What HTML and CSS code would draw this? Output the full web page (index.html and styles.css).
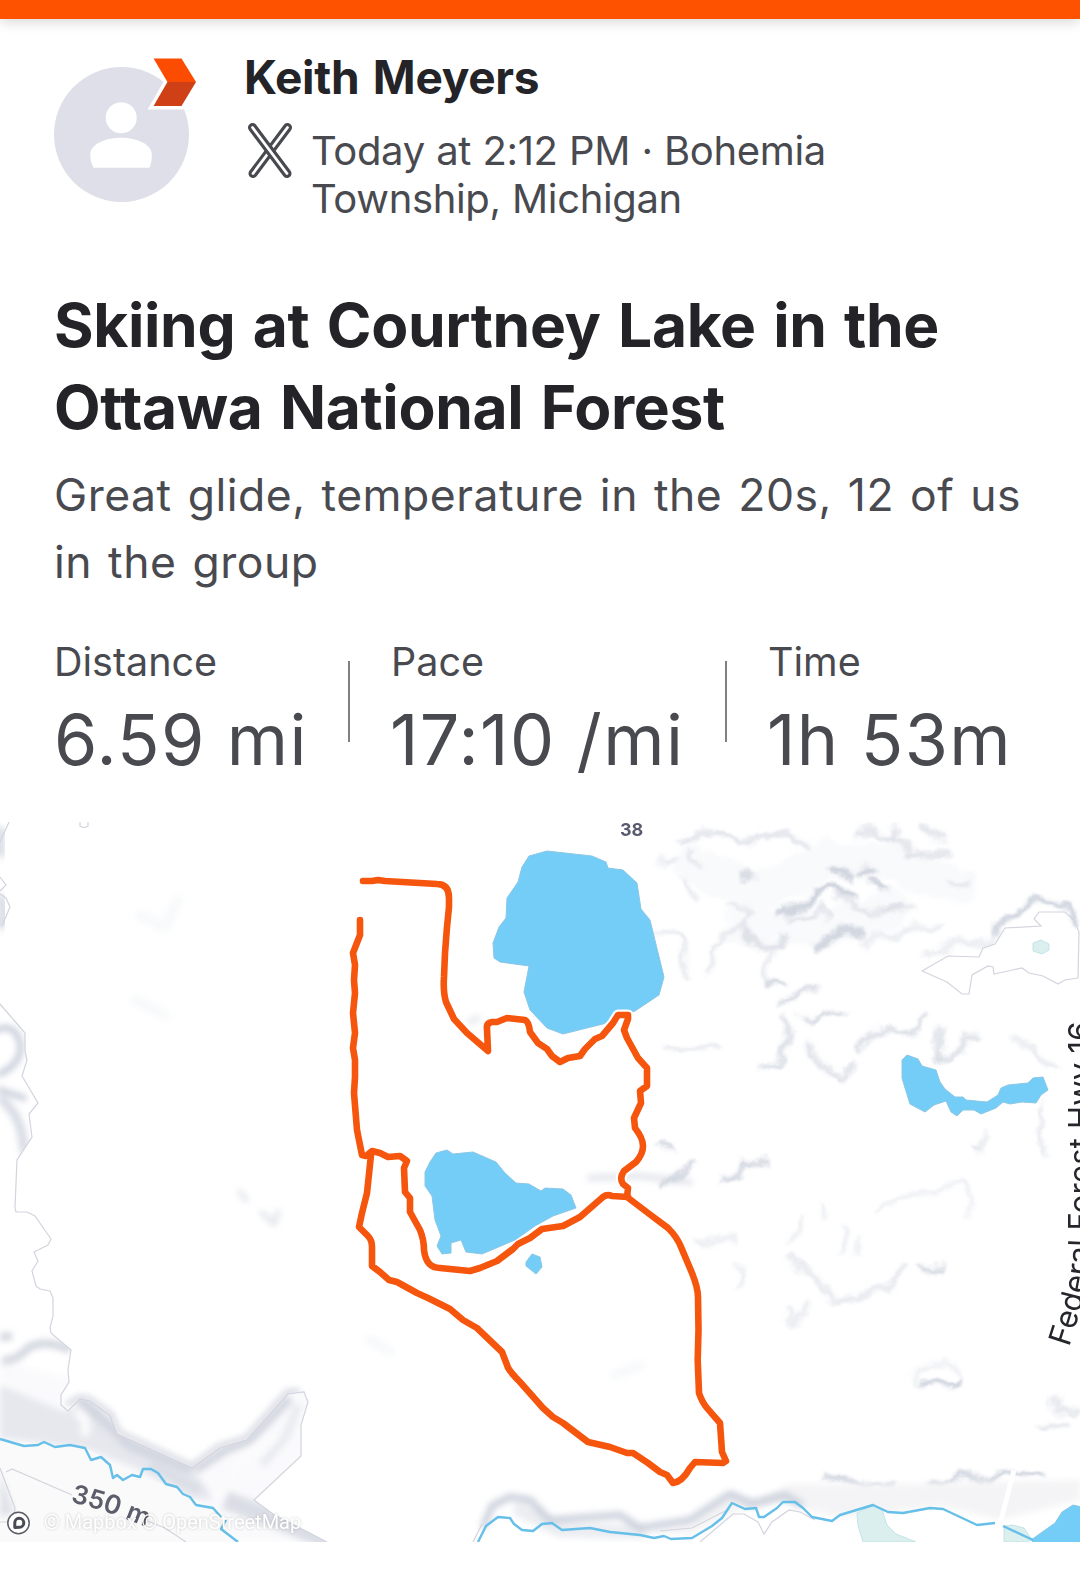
FILE: index.html
```html
<!DOCTYPE html>
<html lang="en">

<head>
    <meta charset="UTF-8">
    <meta name="viewport" content="width=device-width, initial-scale=1.0">
    <title>Activity</title>
    <link rel="stylesheet" href="styles.css">
</head>

<body>
    <div class="top-bar"></div>

    <header class="athlete">
        <svg class="avatar" viewBox="54 54 144 150">
            <circle cx="121.5" cy="134.5" r="67.5" fill="#dedfe8" />
            <circle cx="121.2" cy="117.7" r="15.5" fill="#fff" />
            <path d="M93.500 167.700C91 163 90 158 90.300 153C92 143 107 137.700 121 137.700S150 143 151.700 153C152 158 151.500 163 149.500 167.700Z" fill="#fff" />
            <path d="M153.600 58.500H181.500L196 82L181.500 106H153.600L167.400 82Z" fill="#fff" stroke="#fff" stroke-width="7" />
            <path d="M153.600 58.500H181.500L196 82H167.400Z" fill="#fc4c02" />
            <path d="M167.400 82H196L181.500 106H153.600Z" fill="#cf4016" />
        </svg>

        <div class="athlete-info">
            <div class="athlete-name">Keith Meyers</div>
            <div class="meta">
                <svg class="sport-icon" viewBox="0 0 44 55">
                    <path d="M39.500 4.500L5 50.500" class="ski" />
                    <path d="M39.500 4.500L5 50.500" class="ski-inner" />
                    <path d="M4.500 4.500L39 50.500" class="ski" />
                    <path d="M4.500 4.500L39 50.500" class="ski-inner" />
                </svg>
                <div class="meta-text">Today at 2:12 PM · Bohemia<br>Township, Michigan</div>
            </div>
        </div>
    </header>

    <h1 class="title">Skiing at Courtney Lake in the<br>Ottawa National Forest</h1>
    <p class="description">Great glide, temperature in the 20s, 12 of us<br>in the group</p>

    <div class="stats">
        <div class="stat">
            <div class="stat-label">Distance</div>
            <div class="stat-value">6.59 mi</div>
        </div>
        <div class="stat">
            <div class="stat-label">Pace</div>
            <div class="stat-value">17:10 /mi</div>
        </div>
        <div class="stat">
            <div class="stat-label">Time</div>
            <div class="stat-value">1h 53m</div>
        </div>
    </div>

    <svg class="map" viewBox="0 822 1080 720">
        <defs>
            <filter id="soft" x="-20%" y="-20%" width="140%" height="140%">
                <feGaussianBlur stdDeviation="3" />
            </filter>
            <!-- blurred strokes with a ragged edge -->
            <filter id="relief" x="-10%" y="-10%" width="120%" height="120%">
                <feTurbulence type="fractalNoise" baseFrequency="0.012" numOctaves="4" seed="4" result="noise" />
                <feGaussianBlur in="SourceGraphic" stdDeviation="6" />
                <feDisplacementMap in2="noise" scale="60" xChannelSelector="R" yChannelSelector="G" />
            </filter>
            <clipPath id="valley">
                <path d="M0 1300L51 1333L71 1350L68 1370L69 1382L61 1395L61 1405L68 1411L80 1399L90 1401L110 1416L117 1434L192 1468L220 1448L247 1440L288 1394L304 1392L308 1402L301 1425L301 1456L254 1500L273 1514L327 1542H0Z" />
            </clipPath>
            <clipPath id="west">
                <path d="M0 1004L25 1033L25 1050L27 1060L22 1076L38 1103L29 1114L32 1137L17 1160L15 1207H0Z" />
            </clipPath>
            <path id="highway" d="M1069 1347C1078 1318 1091 1284 1091 1230V1000" />
            <path id="contour" d="M70 1502Q112 1512 148 1528" />
        </defs>

        <!-- hillshade, upper right -->
        <g transform="translate(660 820) scale(0.3333)" class="shade" filter="url(#relief)">
            <path d="M100 130L300 220L500 120L700 130L900 200M250 320L500 330L700 260" opacity=".1" stroke-width="110" />
            <path d="M60 65L120 48L190 47L230 65L270 62L310 42L380 50L440 75" opacity=".7" />
            <path d="M85 90L90 120L120 130M70 180L80 215L110 225M0 120L25 140L45 120" opacity=".5" />
            <path d="M240 163L290 168" />
            <path d="M590 42L640 38L700 60L750 80M700 20L690 60M800 20L840 60M740 100L860 100" opacity=".55" stroke-width="18" />
            <path d="M520 140L575 175M630 185L670 215M600 160L640 150" stroke-width="17" />
            <path d="M370 270L420 262L470 215L510 203L570 225" stroke-width="18" />
            <path d="M400 290L450 290L480 250L500 300M530 230L640 280L720 250" opacity=".6" />
            <path d="M470 378L520 350L570 330L600 340" stroke-width="26" opacity=".8" />
            <path d="M600 375L640 350L760 325L850 320M680 260L760 265" stroke-width="16" opacity=".4" />
            <path d="M215 260L270 270L240 310L200 350L160 390L150 470" opacity=".5" />
            <path d="M250 320L275 365L310 388L350 385L380 340" opacity=".8" />
            <path d="M0 340L50 355L70 420L90 470M330 400L315 480L370 490" opacity=".5" />
            <path d="M310 490L380 490M360 550L390 550L430 515L475 498" opacity=".9" />
            <path d="M425 590L450 615L490 580L560 580" opacity=".9" />
            <path d="M580 690L640 635L700 630L750 640L775 600L800 570" opacity=".8" />
            <path d="M375 600L388 680L350 725L300 750" opacity=".8" />
            <path d="M450 670L490 740L540 780L580 740" opacity=".6" stroke-width="16" />
            <path d="M20 690L100 695L180 680" opacity=".5" />
            <path d="M830 720L880 710L910 660L970 645M830 640L845 720" opacity=".8" />
            <path d="M780 415L860 385L930 360L990 355" opacity=".5" />
            <path d="M1000 340L1030 300L1070 290L1110 255L1160 245L1220 260L1250 310" stroke-width="15" />
            <path d="M870 195L930 195M1060 650L1110 680L1190 740M1140 850L1135 950L1155 1000M975 930L955 990L940 970" opacity=".5" />
            <path d="M0 1100L50 1075L90 1035M190 1080L235 1075L250 1025L320 1020M0 970L40 990" />
            <path d="M640 1170L700 1140L840 1120L920 1080L930 1180" opacity=".35" />
            <path d="M480 1150L500 1200M430 1200L400 1260M550 1230V1300M600 1260L590 1300" opacity=".4" />
        </g>
        <g transform="translate(660 1180) scale(0.3333)" class="shade" filter="url(#relief)">
            <path d="M110 175L220 178M240 260L235 320M370 390L405 425L440 370" opacity=".45" />
            <path d="M390 230L440 265L470 310L550 370L690 310L730 250" opacity=".5" stroke-width="14" />
            <path d="M780 260L850 262" />
            <path d="M760 600L770 560L820 545L880 560L890 590" opacity=".35" />
            <path d="M780 605L830 615L880 632L895 610" stroke-width="15" />
            <path d="M1170 660L1200 695L1260 690M1140 740L1220 735" opacity=".6" />
            <path d="M490 890L570 905L700 918M810 915L900 890L990 905L1040 870L1150 880" stroke-width="14" />
        </g>
        <path d="M640 1532L690 1524L732 1494L760 1500L790 1484L900 1484L1080 1480V1500L1000 1520L940 1506L840 1518L780 1502L740 1510L690 1535Z" fill="#f4f4f6" filter="url(#soft)" />
        <g class="shade" filter="url(#soft)">
            <path d="M590 1178L640 1176L690 1182" stroke-width="6" opacity=".5" />
            <path d="M470 1022L478 1018M240 1192L246 1200M262 1213L274 1224L278 1212" stroke-width="5" opacity=".5" />
            <path d="M370 1340L390 1352M615 1375L640 1365M140 915L165 928L178 900M135 1000L165 1015" stroke-width="10" opacity=".12" />
            <path d="M484 1525L492 1506L510 1497L530 1500L550 1520L620 1515L640 1528L690 1520L730 1494L752 1504L785 1495L800 1504" stroke-width="7" opacity=".9" />
            <path d="M520 1510L560 1530L640 1532" stroke-width="14" opacity=".35" />
        </g>

        <g clip-path="url(#west)">
            <g class="shade" filter="url(#soft)">
                <path d="M-4 1030Q14 1022 20 1042Q24 1062 0 1074M0 1090L24 1098" stroke-width="6" />
                <path d="M2 1100Q22 1116 24 1150" stroke-width="9" opacity=".7" />
            </g>
        </g>
        <path d="M0 900Q8 908 0 924M0 852V832" class="shade" stroke-width="4" filter="url(#soft)" opacity=".6" />

        <!-- valley with the river, lower left -->
        <path d="M66 1405L80 1397L90 1399L111 1414L119 1432L192 1466L219 1446L246 1438L287 1392L300 1391" fill="none" stroke="#d2d6df" stroke-width="5" filter="url(#soft)" />
        <g clip-path="url(#valley)">
            <path d="M0 1360L80 1380H330V1542H0Z" fill="#fafafc" filter="url(#soft)" />
            <path d="M0 1385L65 1412L90 1401L120 1436L192 1468L215 1500L190 1498L140 1470L85 1448L0 1438Z" fill="#e6e8ee" filter="url(#soft)" />
            <g fill="none" stroke="#d2d6df" filter="url(#soft)">
                <path d="M0 1337L12 1336M2 1360Q16 1362 28 1348Q46 1338 70 1350" stroke-width="8" />
                <path d="M78 1398L108 1424L130 1445L192 1470" stroke-width="11" />
                <path d="M150 1465L200 1490" stroke-width="9" opacity=".6" />
                <path d="M195 1470L225 1450L250 1440L290 1398" stroke-width="9" />
                <path d="M298 1405L287 1435L262 1465" stroke-width="8" opacity=".45" />
                <path d="M225 1500L265 1515L330 1542" stroke-width="18" opacity=".8" />
            </g>
            <path d="M75 1412Q90 1418 84 1436M215 1500Q220 1480 275 1435" fill="none" stroke="#fbfbfc" stroke-width="9" filter="url(#soft)" />
            <path d="M0 1440L85 1448L140 1477L180 1490L215 1512L236 1542H0Z" fill="#fafafa" />
            <path d="M0 1472L14 1512L0 1518Z" fill="#dfe2e9" filter="url(#soft)" />
        </g>
        <g class="boundary">
            <path d="M0 1004L25 1033L25 1050L27 1060L22 1076L38 1103L29 1114L32 1137L17 1160L15 1207L16 1212L27 1212L35 1216L51 1239L48 1245L34 1252L38 1261L32 1271L36 1286L40 1289L50 1291L53 1298L53 1316L50 1328L51 1333L71 1350L68 1370L69 1382L61 1395L61 1405L68 1411L80 1399L90 1401L110 1416L117 1434L192 1468L220 1448L247 1440L288 1394L304 1392L308 1402L301 1425L301 1456L254 1500L273 1514L327 1542" />
            <path d="M0 842L9 822M0 877L6 885L0 891M0 894L6 898L10 907L2 926M80 822V826Q84 829 88 826V822" />
            <path d="M0 1468L15 1508L14 1516M0 1522H7M6 1472L12 1469L72 1495M145 1520L165 1528L186 1542" />
            <path d="M922 971L948 956L979 957L983 948L995 944L1005 928L1041 926L1034 919L1039 912L1065 912L1074 920L1079 932L1078 978L1065 980L1058 984L1043 976L1029 973L1022 968L994 974L993 967L988 966L972 975L969 994L962 994L947 982Z" />
            <path d="M473 1542L482 1524M660 1531L692 1528L729 1509M700 1542L733 1514L744 1514L758 1522L764 1534L772 1522L789 1510L800 1512L815 1520" />
        </g>

        <!-- water -->
        <g fill="#73cdf6" stroke="#8cc6e4" stroke-width="1" stroke-linejoin="round">
            <path d="M547 851L592 856L606 862L608 868L623 870L637 883L641 909L650 920L664 977L659 995L635 1011L603 1024L563 1034L547 1028L530 1010L524 992L529 966L500 962L494 958L493 943L499 927L506 918L507 898L518 882L522 867L529 856Z" />
            <path d="M436 1153L447 1150L453 1154L473 1152L496 1162L505 1173L516 1183L529 1184L541 1191L545 1188L563 1189L571 1195L576 1208L553 1216L535 1226L515 1240L482 1254L466 1252L461 1240L451 1243L451 1253L442 1254L437 1246L441 1236L435 1220L432 1196L425 1186L425 1172L430 1162Z" />
            <path d="M532 1254L540 1257L542 1267L536 1274L526 1266L526 1262Z" />
            <path d="M902 1060L907 1055L918 1059L922 1066L936 1070L940 1082L945 1089L955 1097L963 1097L966 1100L987 1102L998 1095L1001 1088L1008 1085L1028 1083L1033 1078L1043 1077L1048 1090L1041 1095L1036 1103L1022 1102L1010 1104L1003 1102L996 1108L981 1114L974 1110L963 1110L957 1116L951 1112L946 1101L934 1105L925 1112L910 1104L905 1088L902 1078Z" />
            <path d="M1031 1540L1055 1523L1062 1512L1073 1505L1082 1507V1543H1034Z" />
        </g>
        <g fill="#dcefef" stroke="#b9dfe3" stroke-width=".8">
            <path d="M857 1513L873 1505L882 1510L887 1525L896 1534L916 1542H863L858 1526Z" />
            <path d="M1004 1526L1013 1525L1024 1528L1032 1540L1025 1542H1004Z" />
            <path d="M1033 943L1041 940L1049 944L1049 950L1042 954L1033 951Z" />
        </g>
        <g class="river">
            <path d="M0 1439L24 1446L38 1445L44 1442L55 1447L70 1445L85 1448L91 1460L101 1457L110 1465L113 1478L117 1475L123 1480L132 1475L140 1477L143 1469L151 1469L158 1473L166 1484L177 1487L183 1494L190 1497L196 1505L213 1508L221 1517M226 1520L221 1529L238 1542" />
            <path d="M478 1542L486 1526L498 1517L510 1518L514 1524L522 1530L533 1531L542 1524L552 1523L562 1530L590 1528L610 1532L640 1535L654 1538L664 1536L671 1539L692 1538L702 1532L712 1526L722 1518L732 1503L745 1509L756 1508L759 1517L764 1517L777 1508L783 1502L795 1502L803 1508L812 1517L832 1521L840 1515L873 1505L888 1512L903 1513L930 1508L943 1509L977 1525L995 1523M1003 1526L1033 1540" />
        </g>
        <path d="M1014 1470L1000 1524" stroke="#fff" stroke-width="5" />

        <!-- recorded track -->
        <g class="casing">
            <use href="#track" />
        </g>
        <g class="track">
            <path id="track" d="M363 881L372 881L378 880L385 881L437 884Q449 884 449 898L449 907L447 927L445 953L444 977Q443 992 446 1002L454 1019L467 1033L488 1051L487 1029Q486 1023 492 1022L497 1022L507 1018L525 1020Q529 1022 530 1032L538 1043L547 1049L552 1056L560 1062L568 1058L580 1056L585 1049L595 1039L602 1036L613 1023L618 1015H628V1019L624 1030L627 1038L638 1058L647 1068V1086L640 1091L641 1103L634 1118L635 1128Q643 1138 643 1146Q643 1154 636 1162L624 1171Q619 1178 623 1184L628 1188L627 1197L648 1213L668 1228Q677 1237 681 1247L692 1273Q698 1288 698 1297L698.500 1330L697.700 1360L699 1393Q702 1402 707 1408L720 1423L722 1452L726 1461L723 1463L695 1462L690 1468Q682 1482 673 1483L667 1475L660 1472L648 1463L633 1453L627 1453L610 1447L588 1442L563 1423L553 1417L543 1408L520 1382Q508 1370 507 1365L502 1352L477 1328L463 1320L450 1309L428 1298L417 1293L397 1282L389 1280L380 1272L372 1266V1247Q372 1240 368 1236L359 1227L362 1213L367 1193L371 1155" />
            <path d="M360 920V935L353 953L355 965L354 980L355 993L353 1013L355 1033L353 1048L355 1060V1077L354 1093L357 1130L362 1155L366 1156L372 1151L380 1153L388 1157L400 1156L407 1161L404 1168L405 1192L410 1198V1212L420 1230Q424 1240 424 1250Q426 1268 440 1268L470 1271L480 1268L497 1261L513 1249L518 1244L530 1238L542 1229L563 1226L580 1217L603 1197Q607 1194 612 1196L628 1197" />
        </g>

        <text x="620" y="835.500" class="elevation">38</text>
        <text class="contour-label"><textPath href="#contour">350 m</textPath></text>
        <text class="road-label"><textPath href="#highway">Federal Forest Hwy 16</textPath></text>

        <text x="44" y="1528.500" class="attribution">© Mapbox © OpenStreetMap</text>
        <circle cx="18.500" cy="1523" r="10.700" fill="#fff" stroke="#5c5d66" stroke-width="1.500" />
        <path d="M14.800 1527.500V1523A4.500 4.500 0 1 1 19.500 1527.300Z" fill="none" stroke="#4a4b54" stroke-width="3" stroke-linejoin="round" />
    </svg>
</body>

</html>
```
FILE: styles.css
```css
body {
    margin: 0;
    width: 1080px;
    background-color: #fff;
    color: #494a50;
    font-family: Inter, sans-serif;
}

.top-bar {
    height: 19px;
    background-color: #ff5200;
    box-shadow: 0 2px 14px rgba(0, 0, 0, 0.18);
}

.athlete {
    display: flex;
    padding: 30px 54px 0;
}

.avatar {
    width: 144px;
    height: 150px;
    margin-top: 5px;
}

.athlete-info {
    margin-left: 46px;
}

.athlete-name {
    font-size: 46px;
    line-height: 56px;
    font-weight: 700;
    letter-spacing: -0.3px;
    word-spacing: 3px;
    color: #242428;
}

.meta {
    display: flex;
    margin-top: 22px;
    font-size: 40px;
    line-height: 48px;
    letter-spacing: -0.35px;
    word-spacing: 0.5px;
}

.sport-icon {
    width: 44px;
    height: 55px;
    margin: -4px 19px 0 4px;
}

.ski {
    stroke: #494a50;
    stroke-width: 9;
    stroke-linecap: round;
}

.ski-inner {
    stroke: #fff;
    stroke-width: 2.8;
    stroke-linecap: round;
}

.title {
    margin: 61px 0 0 54px;
    font-size: 60.5px;
    line-height: 82px;
    font-weight: 700;
    letter-spacing: -0.35px;
    word-spacing: 3.5px;
    color: #242428;
}

.description {
    margin: 14px 0 0 54px;
    font-size: 44.5px;
    line-height: 67px;
    letter-spacing: 0.5px;
    word-spacing: 3px;
}

.stats {
    display: grid;
    grid-template-columns: 294px 377px 1fr;
    margin: 42px 0 0 54px;
}

.stat + .stat {
    padding-left: 41px;
    background: linear-gradient(#808084, #808084) 0 23px / 2px 81px no-repeat;
}

.stat + .stat .stat-label {
    margin-left: 2px;
}

.stat + .stat .stat-value {
    margin-left: 1px;
}

.stat-label {
    font-size: 39.5px;
    line-height: 48px;
}

.stat-value {
    margin-top: 12px;
    font-size: 70px;
    line-height: 84px;
    letter-spacing: 1.4px;
    white-space: nowrap;
}

.map {
    display: block;
    width: 1080px;
    height: 720px;
    margin-top: 40px;
}

.shade {
    fill: none;
    stroke: #c6ccd8;
    stroke-width: 12;
    stroke-linecap: round;
    stroke-linejoin: round;
}

.boundary {
    fill: none;
    stroke: #d3d4de;
    stroke-width: 1.2;
}

.river {
    fill: none;
    stroke: #66bfe8;
    stroke-width: 2.4;
    stroke-linejoin: round;
}

.track,
.casing {
    fill: none;
    stroke: #f5550c;
    stroke-width: 6.6;
    stroke-linecap: round;
    stroke-linejoin: round;
}

.casing {
    stroke: #fff;
    stroke-width: 11;
}

.elevation {
    font-size: 18px;
    font-weight: 700;
    fill: #585b70;
}

.contour-label {
    font-size: 26px;
    font-weight: 600;
    fill: #5b5d6a;
}

.road-label {
    font-size: 31px;
    letter-spacing: 0.2px;
    fill: #24262b;
    stroke: #fff;
    stroke-width: 3;
    paint-order: stroke;
}

.attribution {
    font-family: Roboto, sans-serif;
    font-size: 20px;
    fill: #fff;
    text-shadow: 0 0 3px rgba(0, 0, 0, 0.22);
}
```
